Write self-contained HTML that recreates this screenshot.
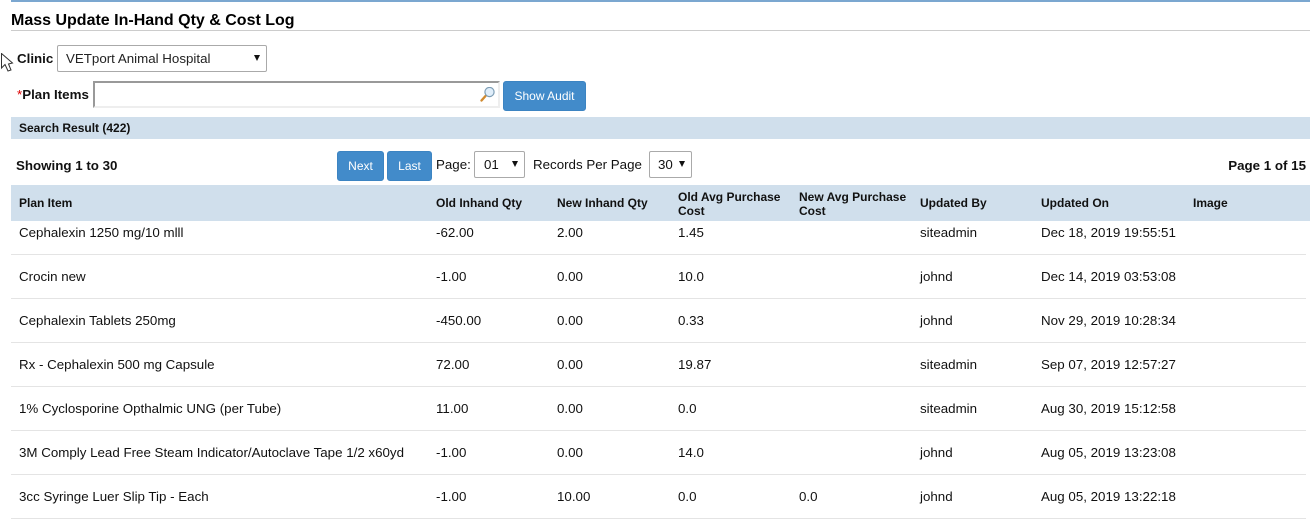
<!DOCTYPE html>
<html><head><meta charset="utf-8"><style>
html,body{margin:0;padding:0;background:#fff;width:1315px;height:519px;overflow:hidden}
body{position:relative;font-family:"Liberation Sans",sans-serif;font-size:13.33px;color:#111}
.a{position:absolute;white-space:nowrap;line-height:15px}
.b{font-weight:bold}
.h{font-weight:bold;font-size:12px;line-height:14px}
.bar{position:absolute;left:11px;width:1299px;background:#d0dfec}
.btn{position:absolute;background:#428bca;border-radius:3px;color:#fff;text-align:center;font-size:12px;border:1px solid #3c84c2;box-sizing:border-box}
.sel{position:absolute;border:1px solid #aaa;border-radius:2px;box-sizing:border-box;background:#fff}
.tri{position:absolute;width:0;height:0;border-left:3.5px solid transparent;border-right:3.5px solid transparent;border-top:6px solid #111}
.line{position:absolute;left:11px;width:1295px;height:1px;background:#e4e4e4}
</style></head><body>
<div style="position:absolute;left:11px;top:0;width:1299px;height:2px;background:#7ba7d0"></div>
<div class="a b" style="left:11px;top:12px;font-size:16px;line-height:17px;color:#000">Mass Update In-Hand Qty &amp; Cost Log</div>
<div style="position:absolute;left:11px;top:30px;width:1299px;height:1px;background:#ccc"></div>

<svg style="position:absolute;left:1px;top:53px" width="13" height="20" viewBox="0 0 13 20"><path d="M.5 .5V15L4 11.5L7 18L10 17L7.5 11L11.5 10Z" fill="#fff" stroke="#333" stroke-width="1"/></svg>

<div class="a b" style="left:17px;top:51px">Clinic</div>
<div class="sel" style="left:57px;top:45px;width:210px;height:27px"></div>
<div class="a" style="left:66px;top:51px;color:#222">VETport Animal Hospital</div>
<div class="tri" style="left:254px;top:55px"></div>

<div class="a b" style="left:17px;top:87px"><span style="color:#d00;font-weight:normal">*</span>Plan Items</div>
<div style="position:absolute;left:93px;top:81px;width:407px;height:27px;box-sizing:border-box;border:2px solid #eee;border-top-color:#999;border-left-color:#999;background:#fff"></div>
<svg style="position:absolute;left:479px;top:87px" width="16" height="16" viewBox="0 0 16 16"><path d="M2.5 13.5L6.5 9" stroke="#d08a30" stroke-width="2.4" stroke-linecap="round"/><circle cx="10.5" cy="5" r="4.6" fill="#e0eefa" stroke="#7d9db5" stroke-width="1.2"/></svg>
<div class="btn" style="left:503px;top:81px;width:83px;height:30px;line-height:28px">Show Audit</div>

<div class="bar" style="top:117px;height:22px"></div>
<div class="a b" style="left:19px;top:121px;line-height:14px;font-size:12px">Search Result (422)</div>

<div class="a b" style="left:16px;top:158px">Showing 1 to 30</div>
<div class="btn" style="left:337px;top:151px;width:47px;height:30px;line-height:28px">Next</div>
<div class="btn" style="left:387px;top:151px;width:45px;height:30px;line-height:28px">Last</div>
<div class="a" style="left:436px;top:157px">Page:</div>
<div class="sel" style="left:474px;top:151px;width:51px;height:27px"></div>
<div class="a" style="left:484px;top:157px">01</div>
<div class="tri" style="left:512px;top:161px"></div>
<div class="a" style="left:533px;top:157px">Records Per Page</div>
<div class="sel" style="left:649px;top:151px;width:43px;height:27px"></div>
<div class="a" style="left:658px;top:157px">30</div>
<div class="tri" style="left:679px;top:161px"></div>
<div class="a b" style="right:9px;top:158px">Page 1 of 15</div>

<div class="bar" style="top:185px;height:36px"></div>
<div class="a h" style="left:19px;top:196px">Plan Item</div>
<div class="a h" style="left:436px;top:196px">Old Inhand Qty</div>
<div class="a h" style="left:557px;top:196px">New Inhand Qty</div>
<div class="a h" style="left:678px;top:190px">Old Avg Purchase<br>Cost</div>
<div class="a h" style="left:799px;top:190px">New Avg Purchase<br>Cost</div>
<div class="a h" style="left:920px;top:196px">Updated By</div>
<div class="a h" style="left:1041px;top:196px">Updated On</div>
<div class="a h" style="left:1193px;top:196px">Image</div>

<div class="a" style="left:19px;top:225px">Cephalexin 1250 mg/10 mlll</div>
<div class="a" style="left:436px;top:225px">-62.00</div>
<div class="a" style="left:557px;top:225px">2.00</div>
<div class="a" style="left:678px;top:225px">1.45</div>
<div class="a" style="left:920px;top:225px">siteadmin</div>
<div class="a" style="left:1041px;top:225px">Dec 18, 2019 19:55:51</div>
<div class="line" style="top:254px"></div>

<div class="a" style="left:19px;top:269px">Crocin new</div>
<div class="a" style="left:436px;top:269px">-1.00</div>
<div class="a" style="left:557px;top:269px">0.00</div>
<div class="a" style="left:678px;top:269px">10.0</div>
<div class="a" style="left:920px;top:269px">johnd</div>
<div class="a" style="left:1041px;top:269px">Dec 14, 2019 03:53:08</div>
<div class="line" style="top:298px"></div>

<div class="a" style="left:19px;top:313px">Cephalexin Tablets 250mg</div>
<div class="a" style="left:436px;top:313px">-450.00</div>
<div class="a" style="left:557px;top:313px">0.00</div>
<div class="a" style="left:678px;top:313px">0.33</div>
<div class="a" style="left:920px;top:313px">johnd</div>
<div class="a" style="left:1041px;top:313px">Nov 29, 2019 10:28:34</div>
<div class="line" style="top:342px"></div>

<div class="a" style="left:19px;top:357px">Rx - Cephalexin 500 mg Capsule</div>
<div class="a" style="left:436px;top:357px">72.00</div>
<div class="a" style="left:557px;top:357px">0.00</div>
<div class="a" style="left:678px;top:357px">19.87</div>
<div class="a" style="left:920px;top:357px">siteadmin</div>
<div class="a" style="left:1041px;top:357px">Sep 07, 2019 12:57:27</div>
<div class="line" style="top:386px"></div>

<div class="a" style="left:19px;top:401px">1% Cyclosporine Opthalmic UNG (per Tube)</div>
<div class="a" style="left:436px;top:401px">11.00</div>
<div class="a" style="left:557px;top:401px">0.00</div>
<div class="a" style="left:678px;top:401px">0.0</div>
<div class="a" style="left:920px;top:401px">siteadmin</div>
<div class="a" style="left:1041px;top:401px">Aug 30, 2019 15:12:58</div>
<div class="line" style="top:430px"></div>

<div class="a" style="left:19px;top:445px">3M Comply Lead Free Steam Indicator/Autoclave Tape 1/2 x60yd</div>
<div class="a" style="left:436px;top:445px">-1.00</div>
<div class="a" style="left:557px;top:445px">0.00</div>
<div class="a" style="left:678px;top:445px">14.0</div>
<div class="a" style="left:920px;top:445px">johnd</div>
<div class="a" style="left:1041px;top:445px">Aug 05, 2019 13:23:08</div>
<div class="line" style="top:474px"></div>

<div class="a" style="left:19px;top:489px">3cc Syringe Luer Slip Tip - Each</div>
<div class="a" style="left:436px;top:489px">-1.00</div>
<div class="a" style="left:557px;top:489px">10.00</div>
<div class="a" style="left:678px;top:489px">0.0</div>
<div class="a" style="left:799px;top:489px">0.0</div>
<div class="a" style="left:920px;top:489px">johnd</div>
<div class="a" style="left:1041px;top:489px">Aug 05, 2019 13:22:18</div>
<div class="line" style="top:518px"></div>
</body></html>
